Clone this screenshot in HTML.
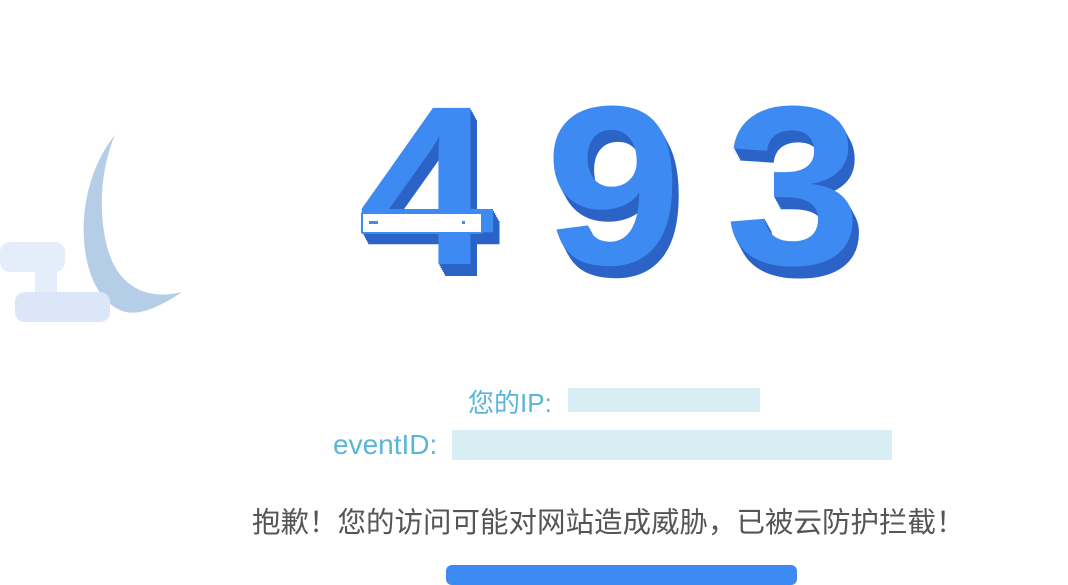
<!DOCTYPE html>
<html><head><meta charset="utf-8"><style>
body{margin:0;width:1068px;height:576px;overflow:hidden;background:#fff;position:relative;font-family:"Liberation Sans","Noto Sans CJK SC",sans-serif}
.d{position:absolute;top:73px;font-weight:bold;font-size:227px;line-height:227px;color:#3d8bf2;transform:scaleX(1.08);transform-origin:left top;
text-shadow:1px 2px 0 #2b63c6,2px 4px 0 #2b63c6,3px 6px 0 #2b63c6,4px 8px 0 #2b63c6,5px 10px 0 #2b63c6,6px 12px 0 #2b63c6}
.t{position:absolute;white-space:nowrap}
.b{position:absolute;background:#cfe8f2}
</style></head><body>
<svg style="position:absolute;left:0;top:120px" width="200" height="220">
<path d="M115 15 C70 70 75 170 120 190 C135 197 155 190 182 172 C150 180 120 170 108 130 C98 95 100 50 115 15Z" fill="#b6cde8"/>
<rect x="0" y="122" width="65" height="30" rx="10" fill="#e4eefb"/>
<rect x="35" y="140" width="22" height="40" fill="#e4eefb"/>
<rect x="15" y="172" width="95" height="30" rx="10" fill="#dbe7f8"/>
</svg>
<div class="d" style="left:358px">4</div>
<div style="position:absolute;left:361px;top:212px;width:122px;height:22px;background:#fff;border:2px solid #3d8bf2;box-sizing:border-box;border-radius:2px"></div>
<div style="position:absolute;left:369px;top:221px;width:9px;height:3px;background:#3d8bf2"></div>
<div style="position:absolute;left:462px;top:221px;width:16px;height:3px;border-left:3px dotted #3d8bf2"></div>
<div class="d" style="left:545px">9</div>
<div class="d" style="left:725px">3</div>
<div class="t" style="left:468px;top:383px;font-size:26px;color:#5ab5d6">您的IP: </div>
<div class="b" style="left:568px;top:388px;width:192px;height:24px;opacity:.8"></div>
<div class="t" style="left:333px;top:429px;font-size:28px;color:#5ab5d6">eventID: </div>
<div class="b" style="left:452px;top:430px;width:440px;height:30px;opacity:.8"></div>
<div class="t" style="left:252px;top:500px;font-size:28.5px;color:#555">抱歉！您的访问可能对网站造成威胁，已被云防护拦截！</div>
<div style="position:absolute;left:446px;top:565px;width:351px;height:20px;background:#3d8bf2;border-radius:6px"></div>
</body></html>
